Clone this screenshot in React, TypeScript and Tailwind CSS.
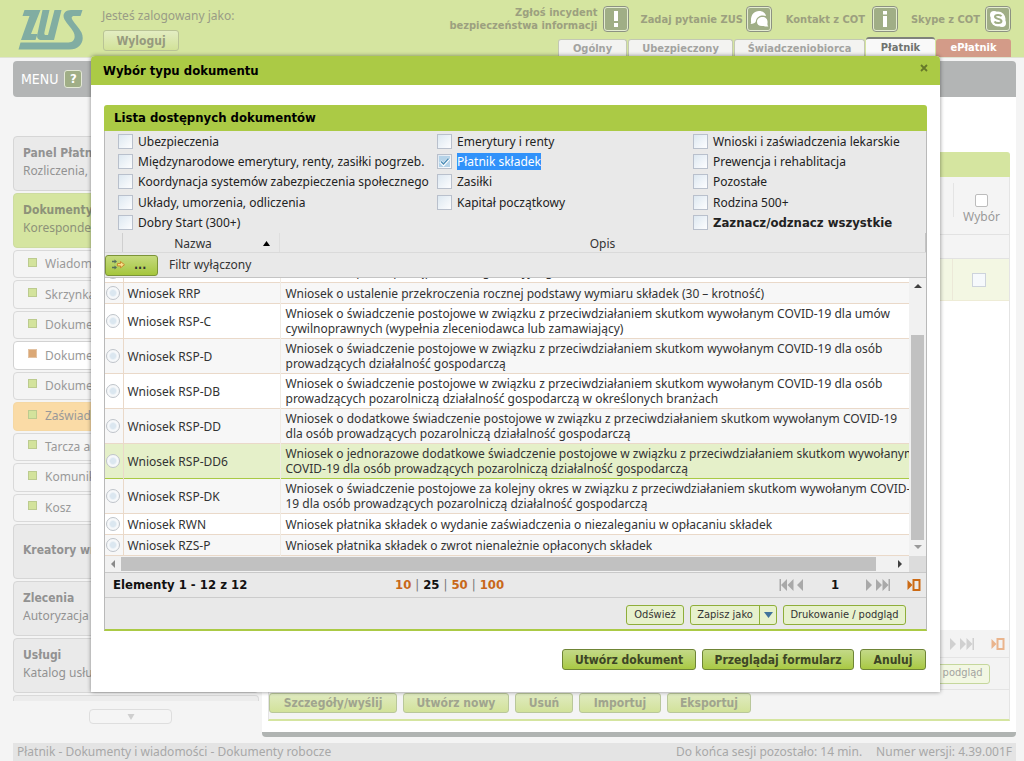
import { useState } from 'react'
import type { ReactNode } from 'react'

const tabs = ['Ogólny', 'Ubezpieczony', 'Świadczeniobiorca', 'Płatnik', 'ePłatnik']

const tabWidths: Record<string, string> = {
  'Ogólny': 'w-[69px]',
  'Ubezpieczony': 'w-[105px]',
  'Świadczeniobiorca': 'w-[131px]',
  'Płatnik': 'w-[69px]',
  'ePłatnik': 'w-[75px]'
}

const folders = [
  { name: 'Wiadomości', state: 'normal' },
  { name: 'Skrzynka', state: 'normal' },
  { name: 'Dokumenty', state: 'normal' },
  { name: 'Dokumenty', state: 'active' },
  { name: 'Dokumenty', state: 'normal' },
  { name: 'Zaświadczenia', state: 'highlight' },
  { name: 'Tarcza antykryzysowa', state: 'normal' },
  { name: 'Komunikaty', state: 'normal' },
  { name: 'Kosz', state: 'normal' }
]

const filterColumns = [
  [
    'Ubezpieczenia',
    'Międzynarodowe emerytury, renty, zasiłki pogrzeb.',
    'Koordynacja systemów zabezpieczenia społecznego',
    'Układy, umorzenia, odliczenia',
    'Dobry Start (300+)'
  ],
  ['Emerytury i renty', 'Płatnik składek', 'Zasiłki', 'Kapitał początkowy'],
  [
    'Wnioski i zaświadczenia lekarskie',
    'Prewencja i rehablitacja',
    'Pozostałe',
    'Rodzina 500+',
    'Zaznacz/odznacz wszystkie'
  ]
]

const documents = [
  {
    name: 'Wniosek RR',
    lines: ['Wniosek o wpis do postępowania egzekucyjnego']
  },
  {
    name: 'Wniosek RRP',
    lines: ['Wniosek o ustalenie przekroczenia rocznej podstawy wymiaru składek (30 – krotność)']
  },
  {
    name: 'Wniosek RSP-C',
    lines: [
      'Wniosek o świadczenie postojowe w związku z przeciwdziałaniem skutkom wywołanym COVID-19 dla umów',
      'cywilnoprawnych (wypełnia zleceniodawca lub zamawiający)'
    ]
  },
  {
    name: 'Wniosek RSP-D',
    lines: [
      'Wniosek o świadczenie postojowe w związku z przeciwdziałaniem skutkom wywołanym COVID-19 dla osób',
      'prowadzących działalność gospodarczą'
    ]
  },
  {
    name: 'Wniosek RSP-DB',
    lines: [
      'Wniosek o świadczenie postojowe w związku z przeciwdziałaniem skutkom wywołanym COVID-19 dla osób',
      'prowadzących pozarolniczą działalność gospodarczą w określonych branżach'
    ]
  },
  {
    name: 'Wniosek RSP-DD',
    lines: [
      'Wniosek o dodatkowe świadczenie postojowe w związku z przeciwdziałaniem skutkom wywołanym COVID-19',
      'dla osób prowadzących pozarolniczą działalność gospodarczą'
    ]
  },
  {
    name: 'Wniosek RSP-DD6',
    lines: [
      'Wniosek o jednorazowe dodatkowe świadczenie postojowe w związku z przeciwdziałaniem skutkom wywołanym',
      'COVID-19 dla osób prowadzących pozarolniczą działalność gospodarczą'
    ]
  },
  {
    name: 'Wniosek RSP-DK',
    lines: [
      'Wniosek o świadczenie postojowe za kolejny okres w związku z przeciwdziałaniem skutkom wywołanym COVID-',
      '19 dla osób prowadzących pozarolniczą działalność gospodarczą'
    ]
  },
  {
    name: 'Wniosek RWN',
    lines: ['Wniosek płatnika składek o wydanie zaświadczenia o niezaleganiu w opłacaniu składek']
  },
  {
    name: 'Wniosek RZS-P',
    lines: ['Wniosek płatnika składek o zwrot nienależnie opłaconych składek']
  }
]

function Logo() {
  return (
    <svg width="66" height="42" viewBox="0 0 66 42" fill="#81ada2" aria-label="ZUS">
      <path d="M6.500 1H22.500L13 25H19.500L17.500 31H3L11.500 7H4.500Z" />
      <path d="M24.500 1H31.500L26.500 23C26 25.500 26.500 26 28.500 26H30L36.500 1H43.500L36 31H24C20 31 18.500 29 19.300 25.500Z" />
      <path d="M64.500 1H53C46.500 1 44 6 46.500 10.500C49 15 53 18.500 55.500 23C58 28 56.500 33.500 50.500 33.500H2.500L0.500 40.500H51C63 40.500 67 31 63.500 23.500C61 18.500 56.500 14.500 54.500 11C53 8.500 53.500 7 56.500 7H62.500Z" />
    </svg>
  )
}

function BadgeIcon({ children }: { children: ReactNode }) {
  return (
    <svg width="26" height="26" viewBox="0 0 26 26" className="shrink-0">
      <rect x="0.500" y="0.500" width="25" height="25" rx="3.500" fill="#e4ecd0" stroke="#8c9282" />
      <rect x="2" y="2" width="22" height="22" rx="2" fill="#a0ae86" />
      {children}
    </svg>
  )
}

function HeaderLink({ children, icon, className = '' }: { children: ReactNode; icon: ReactNode; className?: string }) {
  return (
    <a href="#" className={`flex items-center text-right text-[11px] leading-[13px] font-bold text-[#9ca07f] ${className}`}>
      <span>{children}</span>
      {icon}
    </a>
  )
}

function PagerPrev() {
  return (
    <svg width="26" height="14" viewBox="0 0 26 14" fill="#a9a9a9">
      <path d="M0.500 1h1.500v12h-1.500zM8 1v12L2 7zM14.500 1v12L8.500 7zM24 1v12L18 7z" />
    </svg>
  )
}

function PagerNext({ color }: { color: string }) {
  return (
    <svg width="26" height="14" viewBox="0 0 26 14" fill={color}>
      <path d="M1 1v12L7 7zM11 1v12L17 7zM17.500 1v12L23.500 7zM23.500 1h1.500v12h-1.500z" />
    </svg>
  )
}

function PagerGo({ color }: { color: string }) {
  return (
    <svg width="14" height="14" viewBox="0 0 14 14">
      <path d="M0.500 2v10L5.500 7z" fill={color} />
      <rect x="6.500" y="2" width="6" height="10" fill="none" stroke={color} strokeWidth="2" />
    </svg>
  )
}

function Check({ id, checked, onChange }: { id: string; checked: boolean; onChange: () => void }) {
  return (
    <span className="relative flex size-[15px] shrink-0">
      <input
        id={id}
        type="checkbox"
        checked={checked}
        onChange={onChange}
        className="size-[15px] appearance-none border border-[#b9c0cc] bg-linear-to-br from-[#dde8f1] to-[#fdfdfe]"
      />
      {checked && (
        <svg className="pointer-events-none absolute inset-0" width="15" height="15" viewBox="0 0 15 15">
          <rect x="2" y="2" width="11" height="11" fill="#b5d3e8" />
          <path d="M3.500 7.500L6.500 10.500L12 4.500" fill="none" stroke="#fff" strokeWidth="3" />
          <path d="M4 7.500L6.500 10L11.500 4.500" fill="none" stroke="#4f8fb8" strokeWidth="1.500" />
        </svg>
      )}
    </span>
  )
}

function Header() {
  return (
    <header className="flex h-[58px] justify-between border-b border-[#dfe3d2] bg-[#d5e5a0]">
      <div className="flex pl-[18px]">
        <div className="w-[84px] pt-[9px]">
          <Logo />
        </div>
        <div className="flex flex-col items-start pt-[8px]">
          <p className="text-[12px] leading-[16px] text-[#999c86]">Jesteś zalogowany jako:</p>
          <button className="mt-[6px] ml-px h-[21px] w-[76px] rounded-[3px] border border-[#b9c395] bg-linear-to-b from-[#e3edc2] to-[#d2e298] text-[12px] leading-[18px] font-bold text-[#969a7e]">
            Wyloguj
          </button>
        </div>
      </div>
      <div className="flex flex-col items-end justify-between">
        <div className="flex items-center pt-[6px] pr-[13px]">
          <HeaderLink
            className="gap-[5px]"
            icon={
              <BadgeIcon>
                <path d="M11 5h4v10h-4zM11 17h4v4h-4z" fill="#fff" />
              </BadgeIcon>
            }
          >
            Zgłoś incydent
            <br />
            bezpieczeństwa informacji
          </HeaderLink>
          <HeaderLink
            className="ml-[12px] gap-[3px]"
            icon={
              <BadgeIcon>
                <path d="M5 15.500C4.500 9 8 5 13 5C17 5 19.500 7 20 10C16 8.500 10.500 10 9.800 15.500C9.500 17 7 18 4.500 18C5.200 17.300 5.200 16.500 5 15.500Z" fill="#fff" />
                <path d="M11 16C11 12.500 13.500 11 16.500 11C20 11 22 13.500 21.500 17C21.300 18.500 21.500 19.500 22.500 20.500C20.500 20.800 19 20.500 17.500 20C13.500 20.500 11 19 11 16Z" fill="#fff" />
              </BadgeIcon>
            }
          >
            Zadaj pytanie ZUS
          </HeaderLink>
          <HeaderLink
            className="ml-[14px] gap-[7px]"
            icon={
              <BadgeIcon>
                <path d="M11 5h4v3.500h-4zM11 10h4v11h-4z" fill="#fff" />
              </BadgeIcon>
            }
          >
            Kontakt z COT
          </HeaderLink>
          <HeaderLink
            className="ml-[13px] gap-[5px]"
            icon={
              <BadgeIcon>
                <circle cx="13" cy="13" r="7.500" fill="#fff" />
                <circle cx="9" cy="9" r="4" fill="#fff" />
                <circle cx="17" cy="17" r="4" fill="#fff" />
                <path
                  d="M16.500 10.200c-1-1.700-6.500-1.900-6.500 0.600c0 2.600 6.500 1.500 6.500 4.300c0 2.600-5.800 2.500-7 0.300"
                  fill="none"
                  stroke="#a0ae86"
                  strokeWidth="2"
                />
              </BadgeIcon>
            }
          >
            Skype z COT
          </HeaderLink>
        </div>
        <nav className="flex items-end gap-px pr-[13px] text-center text-[11px] leading-[18px] font-bold">
          {tabs.map((tab) => (
            <a
              key={tab}
              href="#"
              className={`${tabWidths[tab]} rounded-t-[3px] ${
                tab === 'Płatnik'
                  ? 'h-[20px] border-t-2 border-[#7f827b] bg-[#f9f9f9] text-[#70736f]'
                  : tab === 'ePłatnik'
                    ? 'h-[18px] bg-[#d39b88] text-white'
                    : 'h-[18px] border border-b-0 border-[#c3c8b4] bg-[#f3f3f1] text-[#a3a3a0]'
              }`}
            >
              {tab}
            </a>
          ))}
        </nav>
      </div>
    </header>
  )
}

function MenuCard({ title, text, active = false }: { title: string; text?: string; active?: boolean }) {
  return (
    <a
      href="#"
      className={`flex h-[55px] shrink-0 flex-col justify-center gap-[2px] rounded-[4px] border px-[9px] pb-[4px] text-[12px] leading-[16px] ${
        active ? 'border-[#cddca0] bg-[#d5e5a0] text-[#8d9279]' : 'border-[#d6d6d6] bg-[#eaeaea] text-[#929292]'
      }`}
    >
      <span className="font-bold">{title}</span>
      {text && <span>{text}</span>}
    </a>
  )
}

function Sidebar() {
  return (
    <aside className="flex w-[246px] shrink-0 flex-col gap-[2px] pt-[39px]">
      <MenuCard title="Panel Płatnika" text="Rozliczenia," />
      <MenuCard title="Dokumenty" text="Korespondencja" active />
      <ul className="grid h-[272px] auto-rows-fr gap-[2px] text-[12px] text-[#999]">
        {folders.map((folder, index) => (
          <li
            key={index}
            className={`flex items-center rounded-[4px] border pl-[14px] ${
              folder.state === 'active'
                ? 'border-[#d2d2d2] bg-white'
                : folder.state === 'highlight'
                  ? 'border-[#f5d8a4] bg-[#fadba6]'
                  : 'border-[#d9d9d9] bg-[#f4f4f4]'
            }`}
          >
            <span
              className={`mb-[4px] size-[9px] border ${
                folder.state === 'active' ? 'border-[#e3c3a3] bg-[#dba876]' : 'border-[#bccb8f] bg-[#d3e39c]'
              }`}
            />
            <a href="#" className="pl-[8px]">
              {folder.name}
            </a>
          </li>
        ))}
      </ul>
      <MenuCard title="Kreatory wniosków" />
      <MenuCard title="Zlecenia" text="Autoryzacja" />
      <MenuCard title="Usługi" text="Katalog usług" />
      <div className="h-[6px] rounded-t-[4px] border border-b-0 border-[#dadada] bg-[#ececec]" />
      <button
        aria-label="Przewiń menu"
        className="mt-[6px] ml-[76px] flex h-[15px] w-[83px] items-center justify-center rounded-[4px] border border-[#dedede] bg-[#f5f5f5]"
      >
        <svg width="8" height="6" viewBox="0 0 8 6" fill="#cfcfcf">
          <path d="M0.500 0h7L4 6z" />
        </svg>
      </button>
    </aside>
  )
}

function Workspace() {
  const actions = [
    { name: 'Szczegóły/wyślij', width: 'w-[128px]' },
    { name: 'Utwórz nowy', width: 'w-[106px]' },
    { name: 'Usuń', width: 'w-[58px]' },
    { name: 'Importuj', width: 'w-[82px]' },
    { name: 'Eksportuj', width: 'w-[84px]' }
  ]

  return (
    <main className="flex grow flex-col rounded-b-[4px] border-b-[5px] border-[#b0b4b2] bg-white px-[6px] pt-[55px] pb-[11px]">
      <div className="h-[25px] rounded-t-[3px] bg-[#d5e5a0]" />
      <div className="flex grow flex-col border-x border-b-2 border-x-[#e4e4e4] border-b-[#d5e5a0]">
        <div className="flex h-[58px] justify-end border-b border-[#e2e2e2] bg-[#f4f4f4]">
          <div className="mt-[6px] h-[34px] w-px bg-[#e4e4e4]" />
          <label className="flex w-[55px] flex-col items-center pt-[17px] text-[12px] leading-[16px] text-[#999]">
            <input type="checkbox" className="mb-[2px] size-[13px] appearance-none rounded-[2px] border border-[#bcbcbc] bg-white" />
            Wybór
          </label>
        </div>
        <div className="h-[24px] border-b border-[#e2e2e2] bg-[#f4f4f4]" />
        <div className="flex h-[42px] justify-end border-b border-[#eeecd6] bg-[#f3f7e3]">
          <div className="flex w-[57px] items-center justify-center border-l border-[#ece9d8] pr-[5px]">
            <input type="checkbox" aria-label="Wybierz dokument" className="size-[14px] appearance-none border border-[#cdd3dc] bg-[#f6f9fc]" />
          </div>
        </div>
        <div className="grow" />
        <div className="flex h-[27px] items-center justify-end gap-[16px] bg-[#f3f3f3] pr-[4px]">
          <PagerNext color="#d0d0d0" />
          <PagerGo color="#eab48c" />
        </div>
        <div className="flex h-[33px] items-center justify-end border-y border-[#e4e4e4] bg-[#f3f3f3] pr-[19px]">
          <button className="h-[20px] w-[123px] rounded-[3px] border border-[#c5d79c] bg-[#f2f7e3] font-['DejaVu_Sans_Condensed',sans-serif] text-[11px] text-[#a3a3a0]">
            Drukowanie / podgląd
          </button>
        </div>
        <div className="flex h-[29px] gap-[6px] bg-[#f4f4f4] pt-[3px]">
          {actions.map((action) => (
            <button
              key={action.name}
              className={`${action.width} h-[20px] rounded-[3px] border border-[#b9c79a] bg-linear-to-b from-[#e0ebc0] to-[#d2e29a] text-[12px] leading-[16px] font-bold text-[#a0a48e]`}
            >
              {action.name}
            </button>
          ))}
        </div>
      </div>
    </main>
  )
}

function DocumentRows() {
  const [selected, setSelected] = useState('')

  return (
    <div className="flex h-[278px] min-w-0 grow flex-col justify-end overflow-hidden bg-white">
      <table className="w-full table-fixed border-collapse text-[12px] text-[#333]">
        <colgroup>
          <col className="w-[18px]" />
          <col className="w-[157px]" />
          <col />
        </colgroup>
        <tbody>
          {documents.map((doc, index) => {
            const hovered = doc.name === 'Wniosek RSP-DD6'
            return (
              <tr
                key={doc.name}
                className={`border-b ${doc.lines.length > 1 ? 'h-[35px]' : 'h-[21px]'} ${
                  hovered ? 'border-[#a9ca44] bg-[#e5f0c9]' : index % 2 ? 'border-[#ead9c9] bg-[#f7f7f7]' : 'border-[#ead9c9] bg-white'
                }`}
              >
                <td className="border-r border-[#ead9c9] p-0 pl-[1px] align-middle">
                  <input
                    type="radio"
                    name="document"
                    aria-label={doc.name}
                    checked={selected === doc.name}
                    onChange={() => setSelected(doc.name)}
                    className="block size-[14px] appearance-none rounded-full border border-[#bfc4ca] bg-radial from-[#dbe7f0] from-30% to-[#f6f8fa] to-50%"
                  />
                </td>
                <td className="border-r border-[#f0ebe4] p-0 pl-[4px] align-middle leading-[15px] whitespace-nowrap">{doc.name}</td>
                <td className="overflow-hidden p-0 pl-[5px] align-middle leading-[15px] whitespace-nowrap">
                  {doc.lines.map((line) => (
                    <p key={line}>{line}</p>
                  ))}
                </td>
              </tr>
            )
          })}
        </tbody>
      </table>
    </div>
  )
}

function HorizontalScroll() {
  return (
    <div className="flex h-[17px] border-b border-[#c9c9c9]">
      <div className="flex grow items-center bg-[#f1f1f1]">
        <span className="flex w-[16px] justify-center">
          <svg width="4" height="8" viewBox="0 0 4 8" fill="#8a8a8a">
            <path d="M4 0v8L0 4z" />
          </svg>
        </span>
        <span className="h-[14px] grow bg-[#c1c1c1]" />
        <span className="flex w-[33px] justify-end pr-[7px]">
          <svg width="4" height="8" viewBox="0 0 4 8" fill="#404040">
            <path d="M0 0v8L4 4z" />
          </svg>
        </span>
      </div>
      <span className="w-[17px] bg-[#dcdcdc]" />
    </div>
  )
}

function DocumentTable() {
  const [checked, setChecked] = useState(['Płatnik składek'])

  const toggle = (name: string) => {
    setChecked(checked.includes(name) ? checked.filter((item) => item !== name) : [...checked, name])
  }

  return (
    <section>
      <h2 className="h-[26px] rounded-t-[3px] bg-[#abca45] pl-[10px] text-[13px] leading-[26px] font-bold text-black">
        Lista dostępnych dokumentów
      </h2>
      <div className="border-x border-b-2 border-x-[#b9b9b9] border-b-[#abca45] bg-[#e9e9e9]">
        {/* Category filters */}
        <div className="flex pl-[13px] text-[12px] text-[#222]">
          {filterColumns.map((column, index) => (
            <div
              key={index}
              className={`grid h-[102px] grid-rows-5 items-center ${index === 0 ? 'w-[319px]' : index === 1 ? 'w-[256px]' : 'grow'}`}
            >
              {column.map((name) => (
                <div key={name} className="flex items-center gap-[5px]">
                  <Check id={name} checked={checked.includes(name)} onChange={() => toggle(name)} />
                  <label
                    htmlFor={name}
                    className={`leading-[17px] whitespace-nowrap ${name === 'Płatnik składek' ? 'bg-[#3192fa] text-white' : ''} ${
                      name.startsWith('Zaznacz') ? 'text-[13px] font-bold' : ''
                    }`}
                  >
                    {name}
                  </label>
                </div>
              ))}
            </div>
          ))}
        </div>

        {/* Column headings */}
        <div className="flex h-[20px] items-center border-b border-[#dadada] text-center text-[12px] leading-[19px] text-[#333]">
          <span className="h-[19px] w-[18px] border-r border-[#cfcfcf]" />
          <button className="flex h-[19px] w-[157px] items-center border-r border-[#dedede] pt-[2px] pr-[9px]">
            <span className="grow">Nazwa</span>
            <svg width="7" height="5" viewBox="0 0 7 5">
              <path d="M0 5h7L3.500 0z" />
            </svg>
          </button>
          <span className="h-[19px] grow border-r border-[#c4c4c4] pt-px">Opis</span>
        </div>
        <div className="flex h-[25px] items-center border-b border-[#c4c4c4] text-[12px] text-[#333]">
          <button className="flex h-[21px] w-[53px] items-center gap-[8px] rounded-[3px] border border-[#7c9438] bg-linear-to-b from-[#c5da7c] to-[#a5c63b] pl-[6px]">
            <svg width="14" height="12" viewBox="0 0 14 12">
              <path d="M0 2.500h3M0 8.500h3" stroke="#55705d" strokeWidth="1.500" />
              <path d="M2.500 0.500L5 2.500L2.500 4.500zM2.500 6.500L5 8.500L2.500 10.500z" fill="#55705d" />
              <path d="M5.500 4.500h3v-2l4 3.200l-4 3.200v-2h-3z" fill="#f7dd8b" stroke="#c98a2c" />
            </svg>
            <span className="font-bold">...</span>
          </button>
          <span className="pl-[11px]">Filtr wyłączony</span>
        </div>

        {/* Scrolled list */}
        <div className="flex">
          <DocumentRows />
          <div className="flex w-[17px] shrink-0 flex-col items-center bg-[#f1f1f1]">
            <svg className="mt-[6px]" width="8" height="4" viewBox="0 0 8 4" fill="#404040">
              <path d="M0 4h8L4 0z" />
            </svg>
            <span className="mt-[47px] h-[205px] w-[13px] bg-[#c1c1c1]" />
            <svg className="mt-[5px]" width="8" height="4" viewBox="0 0 8 4" fill="#9a9a9a">
              <path d="M0 0h8L4 4z" />
            </svg>
          </div>
        </div>
        <HorizontalScroll />

        {/* Pager */}
        <div className="flex h-[25px] items-center border-b border-[#cccccc] pr-[5px] pl-[8px] text-[13px] font-bold text-[#111]">
          <span className="w-[282px]">Elementy 1 - 12 z 12</span>
          <span className="flex grow gap-[4px] text-[#c8681a]">
            <a href="#">10</a>
            <span className="font-normal text-[#777]">|</span>
            <span className="text-[#111]">25</span>
            <span className="font-normal text-[#777]">|</span>
            <a href="#">50</a>
            <span className="font-normal text-[#777]">|</span>
            <a href="#">100</a>
          </span>
          <PagerPrev />
          <span className="w-[60px] text-center">1</span>
          <PagerNext color="#a9a9a9" />
          <span className="w-[16px]" />
          <PagerGo color="#cc6a14" />
        </div>
        <div className="flex h-[31px] items-center justify-end gap-[6px] pt-[3px] pr-[20px] font-['DejaVu_Sans_Condensed',sans-serif] text-[11px] text-[#333]">
          <button className="h-[20px] w-[58px] rounded-[3px] border border-[#8fae3a] bg-[#e7f1cd]">Odśwież</button>
          <div className="flex h-[20px] w-[87px] rounded-[3px] border border-[#8fae3a] bg-[#e7f1cd]">
            <button className="grow">Zapisz jako</button>
            <button aria-label="Wybierz format" className="flex w-[17px] items-center justify-center border-l border-[#8fae3a]">
              <svg width="9" height="6" viewBox="0 0 9 6" fill="#41739c">
                <path d="M0 0h9L4.500 6z" />
              </svg>
            </button>
          </div>
          <button className="h-[20px] w-[123px] rounded-[3px] border border-[#8fae3a] bg-[#e7f1cd]">Drukowanie / podgląd</button>
        </div>
      </div>
    </section>
  )
}

function DocumentDialog() {
  const buttons = [
    { name: 'Utwórz dokument', width: 'w-[134px]' },
    { name: 'Przeglądaj formularz', width: 'w-[152px]' },
    { name: 'Anuluj', width: 'w-[66px]' }
  ]

  return (
    <div className="absolute inset-x-0 top-0 pt-[56px] pr-[84px] pl-[91px]">
      <div role="dialog" aria-label="Wybór typu dokumentu" className="rounded-t-[4px] bg-white pb-[22px] shadow-[0_0_4px_rgba(0,0,0,0.45)]">
        <div className="flex h-[29px] justify-between rounded-t-[4px] bg-[#abca45] pr-[12px] pl-[12px]">
          <h1 className="text-[13px] leading-[29px] font-bold text-black">Wybór typu dokumentu</h1>
          <button aria-label="Zamknij" className="flex pt-[8px]">
            <svg width="8" height="8" viewBox="0 0 8 8" fill="none" stroke="#66792a" strokeWidth="1.800">
              <path d="M1 1L7 7M7 1L1 7" />
            </svg>
          </button>
        </div>
        <div className="px-[13px] pt-[20px]">
          <DocumentTable />
          <div className="mt-[18px] flex justify-end gap-[6px] pr-[1px]">
            {buttons.map((button) => (
              <button
                key={button.name}
                className={`${button.width} h-[21px] rounded-[3px] border border-[#6f8536] bg-linear-to-b from-[#c3d987] to-[#a9c941] text-[12px] leading-[18px] font-bold text-[#3d4526]`}
              >
                {button.name}
              </button>
            ))}
          </div>
        </div>
      </div>
    </div>
  )
}

export default function App() {
  return (
    <div className="relative flex min-h-screen flex-col overflow-hidden bg-[#f4f4f4] font-['Noto_Sans',sans-serif] [&_.font-bold]:font-['DejaVu_Sans_Condensed',sans-serif]">
      <Header />
      <div className="mt-[3px] mr-[8px] ml-[13px] flex h-[36px] items-center gap-[6px] rounded-t-[4px] rounded-bl-[4px] bg-[#b3b5b5] pl-[8px]">
        <span className="font-['DejaVu_Sans_Condensed',sans-serif] text-[14px] text-white">MENU</span>
        <a href="#" aria-label="Pomoc" className="size-[18px] rounded-[3px] border border-[#e3e8d6] bg-[#a0ae86] text-center text-[13px] leading-[16px] font-bold text-white">
          ?
        </a>
      </div>
      <div className="mr-[8px] ml-[13px] flex grow gap-[3px]">
        <Sidebar />
        <Workspace />
      </div>
      <footer className="mt-[6px] mr-[8px] ml-[13px] flex h-[18px] items-center justify-between bg-[#e4e4e4] pr-[4px] pl-[4px] text-[12px] text-[#a8a8a8]">
        <span>Płatnik - Dokumenty i wiadomości - Dokumenty robocze</span>
        <span className="flex gap-[14px]">
          <span>Do końca sesji pozostało: 14 min.</span>
          <span>Numer wersji: 4.39.001F</span>
        </span>
      </footer>
      <DocumentDialog />
    </div>
  )
}
